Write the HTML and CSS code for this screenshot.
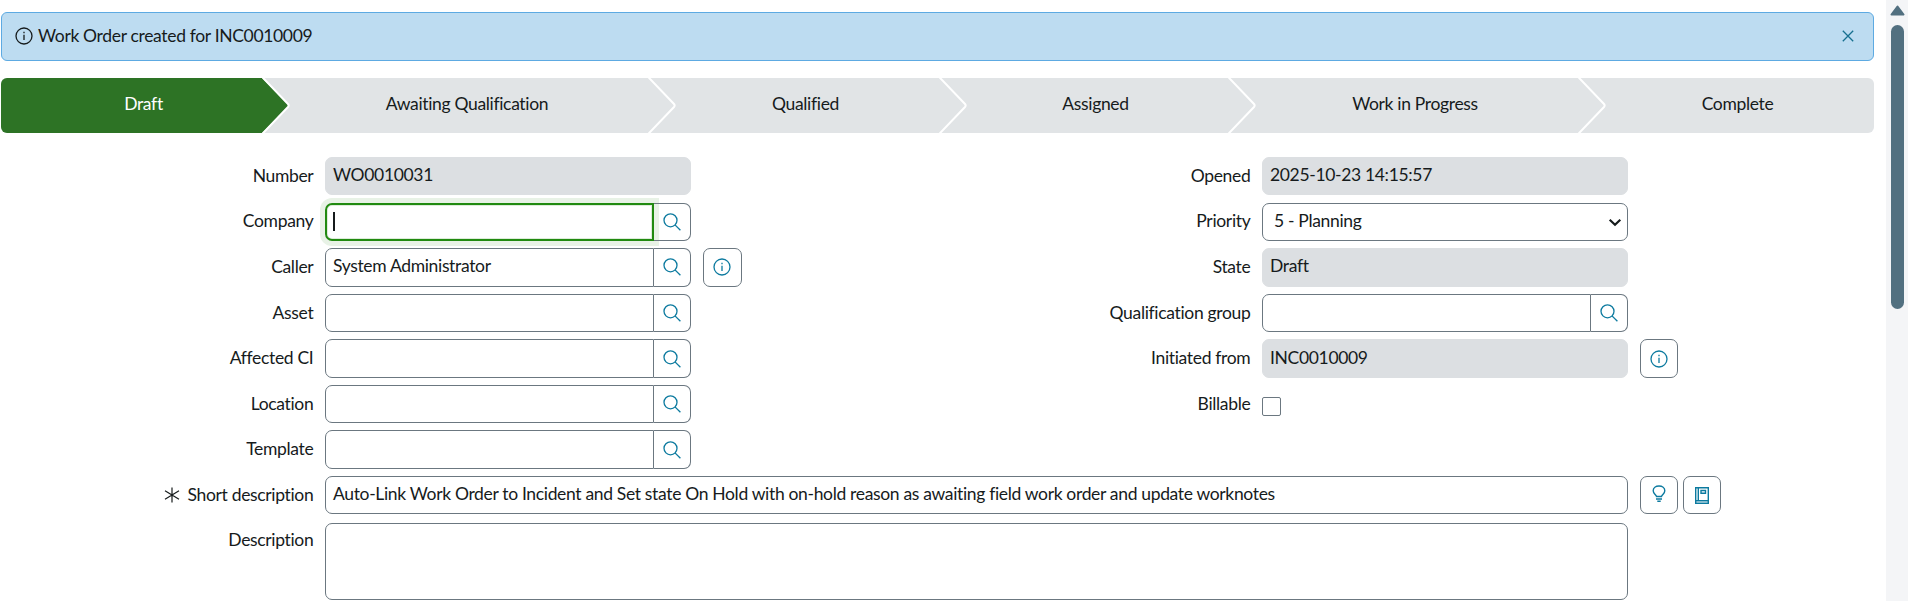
FILE: index.html
```html
<!DOCTYPE html>
<html lang="en">
<head>
<meta charset="utf-8">
<title>Work Order WO0010031</title>
<link rel="stylesheet" href="styles.css">
</head>
<body>
<svg class="defs" aria-hidden="true">
  <symbol id="search" viewBox="0 0 18 18"><circle cx="7.5" cy="7.3" r="6.5"/><path d="M12 11.9L17.4 17.3"/></symbol>
  <symbol id="info" viewBox="0 0 18 18"><circle cx="9" cy="9" r="8"/><path d="M9 7.7V13M9 4.8V6.2"/></symbol>
  <symbol id="chevron" viewBox="0 0 28 55"><path d="M.2 -1L26 26Q27.3 27.5 26 29L.2 56"/></symbol>
</svg>
<div class="page">
  <main class="content">
    <div class="banner">
      <svg class="icon"><use href="#info"/></svg>
      <span>Work Order created for INC0010009</span>
      <svg class="close" viewBox="0 0 12 12"><path d="M.8 .8L11.2 11.2M11.2 .8L.8 11.2"/></svg>
    </div>
    <div class="flow">
      <div class="step draft current">Draft<svg class="tip" viewBox="0 0 28 55"><path class="fill" d="M0 0L25.5 26Q26.5 27.5 25.5 29L0 55Z"/><use href="#chevron"/></svg></div>
      <div class="step awaiting">Awaiting Qualification<svg class="tip"><use href="#chevron"/></svg></div>
      <div class="step qualified">Qualified<svg class="tip"><use href="#chevron"/></svg></div>
      <div class="step assigned">Assigned<svg class="tip"><use href="#chevron"/></svg></div>
      <div class="step progress">Work in Progress<svg class="tip"><use href="#chevron"/></svg></div>
      <div class="step complete">Complete</div>
    </div>
    <form class="form">
      <div class="columns">
        <div class="column">
          <div class="row"><label>Number</label><div class="field readonly">WO0010031</div></div>
          <div class="row"><label>Company</label><div class="field ref focused"><div class="value"><i class="caret"></i></div><div class="lookup"><svg class="icon"><use href="#search"/></svg></div></div></div>
          <div class="row"><label>Caller</label><div class="field ref"><div class="value">System Administrator</div><div class="lookup"><svg class="icon"><use href="#search"/></svg></div></div><div class="button"><svg class="icon"><use href="#info"/></svg></div></div>
          <div class="row"><label>Asset</label><div class="field ref"><div class="value"></div><div class="lookup"><svg class="icon"><use href="#search"/></svg></div></div></div>
          <div class="row"><label>Affected CI</label><div class="field ref"><div class="value"></div><div class="lookup"><svg class="icon"><use href="#search"/></svg></div></div></div>
          <div class="row"><label>Location</label><div class="field ref"><div class="value"></div><div class="lookup"><svg class="icon"><use href="#search"/></svg></div></div></div>
          <div class="row"><label>Template</label><div class="field ref"><div class="value"></div><div class="lookup"><svg class="icon"><use href="#search"/></svg></div></div></div>
        </div>
        <div class="column">
          <div class="row"><label>Opened</label><div class="field readonly">2025-10-23 14:15:57</div></div>
          <div class="row"><label>Priority</label><div class="field select">5 - Planning<svg class="arrow" viewBox="0 0 14 9"><path d="M1.7 1.7L7 6.8L12.3 1.7"/></svg></div></div>
          <div class="row"><label>State</label><div class="field readonly">Draft</div></div>
          <div class="row"><label>Qualification group</label><div class="field ref"><div class="value"></div><div class="lookup"><svg class="icon"><use href="#search"/></svg></div></div></div>
          <div class="row"><label>Initiated from</label><div class="field readonly">INC0010009</div><div class="button"><svg class="icon"><use href="#info"/></svg></div></div>
          <div class="row"><label>Billable</label><div class="checkbox"></div></div>
        </div>
      </div>
      <div class="row"><label><svg class="required" viewBox="0 0 16 16"><path d="M8 .5V15.5M1 3.8L15 12.2M15 3.8L1 12.2"/></svg>Short description</label><div class="field wide">Auto-Link Work Order to Incident and Set state On Hold with on-hold reason as awaiting field work order and update worknotes</div>
        <div class="button"><svg class="bulb" viewBox="0 0 14 18"><path d="M4.5 11.5C4.2 9.7 1.2 8.7 1.2 5.8C1.2 2.9 3.8 1 7 1S12.8 2.9 12.8 5.8C12.8 8.7 9.8 9.7 9.5 11.5Z"/><path d="M4 14H10M5.3 16.3H8.7"/></svg></div>
        <div class="button"><svg class="book" viewBox="0 0 14 17"><path d="M13.3 13.7V.7H.7V16.2H13.3V13.7H1M3.3 1V13.5M6 3.5H10.5V6.2H6Z"/></svg></div>
      </div>
      <div class="row tall"><label>Description</label><div class="field wide"></div></div>
    </form>
  </main>
  <div class="scrollbar">
    <svg class="up" viewBox="0 0 15 11"><path d="M7.5 1.5L13.5 9.5H1.5Z"/></svg>
    <div class="thumb"></div>
  </div>
</div>
</body>
</html>
```
FILE: styles.css
```css
* { box-sizing: border-box; }
body {
  margin: 0;
  background: #fff;
  color: #161b1c;
  font: 17.5px/24px Lato, "Liberation Sans", sans-serif;
  letter-spacing: -0.335px;
  overflow: hidden;
}
svg { display: block; flex: none; fill: none; }
.defs { position: absolute; width: 0; height: 0; }
.page { display: flex; height: 601px; }
.content { flex: 1; min-width: 0; padding: 12px 12px 0 1px; }

.banner {
  display: flex;
  align-items: center;
  width: 1873px;
  height: 49px;
  padding: 0 19px 2px 13px;
  border: 1px solid #5daae2;
  border-radius: 6px;
  background: #bddcf1;
}
.banner span { padding-top: 1px; }
.banner .icon { margin-right: 5px; stroke: #161b1c; }
.close { width: 12px; height: 12px; margin-left: auto; stroke: #17708f; stroke-width: 1.3; }
.icon { width: 18px; height: 18px; stroke: #0c7a9f; stroke-width: 1.3; }

.flow {
  display: flex;
  width: 1873px;
  height: 55px;
  margin-top: 17px;
  border-radius: 6px;
  background: #e1e4e6;
}
.step {
  position: relative;
  display: flex;
  align-items: center;
  justify-content: center;
  padding: 0 0 3px 24px;
}
.step.current { background: #2d7325; color: #fff; border-radius: 6px 0 0 6px; }
.tip { position: absolute; left: 100%; top: 0; width: 28px; height: 55px; stroke: #fff; stroke-width: 2; }
.tip .fill { fill: #2d7325; stroke: none; }
.draft { width: 261px; }
.awaiting { width: 386px; }
.qualified { width: 291px; }
.assigned { width: 289px; }
.progress { width: 350px; }
.complete { flex: 1; padding-left: 23px; }

.form { display: flex; flex-direction: column; gap: 7.2px; margin-top: 24px; }
.columns { display: flex; }
.column { display: flex; flex-direction: column; gap: 7.2px; width: 937px; flex: none; }
.row { display: flex; height: 38.4px; }
label {
  display: flex;
  flex: none;
  align-items: center;
  justify-content: flex-end;
  width: 312.4px;
  margin-right: 11.6px;
  padding-bottom: 0.8px;
}
.field {
  display: flex;
  flex: none;
  align-items: center;
  width: 366px;
  padding: 0 7px 2px;
  border: 1px solid #6b7780;
  border-radius: 7px;
}
.readonly { background: #dcdfe2; border-color: #dcdfe2; }
.select { padding: 0 5px 1.6px 11px; }
.arrow { width: 14px; height: 9px; margin: 3px 0 0 auto; stroke: #161b1c; stroke-width: 2.2; }
.ref { padding: 0; border: 0; }
.value {
  display: flex;
  align-items: center;
  width: 329px;
  height: 100%;
  padding: 0 7px 2.4px;
  border: 1px solid #6b7780;
  border-radius: 7px 0 0 7px;
}
.lookup {
  display: flex;
  align-items: center;
  width: 37px;
  height: 100%;
  padding: 0 0 0 9px;
  border: 1px solid #6b7780;
  border-left: 0;
  border-radius: 0 7px 7px 0;
}
.focused .value {
  border: 2px solid #218a10;
  padding: 0 6px 1px;
  box-shadow: 0 0 0 5px #e8f2e6, inset 0 0 0 1px #dcecd9;
}
.focused .lookup { position: relative; z-index: 1; }
.caret { width: 2px; height: 19px; background: #161b1c; }
.button {
  display: flex;
  flex: none;
  align-items: center;
  justify-content: center;
  width: 38.4px;
  margin-left: 12px;
  border: 1px solid #6b7780;
  border-radius: 7px;
}
.ref + .button { width: 39px; }
.button + .button { margin-left: 4.4px; }
.bulb { width: 14px; height: 18px; margin-bottom: 2px; stroke: #0c7a9f; stroke-width: 1.4; }
.book { width: 14px; height: 17px; margin: 1px 0 0 1px; stroke: #0c7a9f; stroke-width: 1.4; }
.checkbox { width: 19px; height: 19px; margin-top: 12px; border: 1px solid #6b7780; border-radius: 2px; }
.required { width: 16px; height: 16px; margin-right: 8px; stroke: #161b1c; stroke-width: 1.2; }
.wide { width: 1303px; }
.tall { height: 77px; margin-top: 1px; }
.tall label { align-items: flex-start; padding-top: 5px; }

.scrollbar { flex: none; width: 22px; padding: 5px 0 0 4px; background: #f4f5f7; }
.up { width: 15px; height: 11px; fill: #527080; stroke: #527080; stroke-width: 2; stroke-linejoin: round; }
.thumb { width: 13px; height: 284px; margin: 9px 0 0 1px; border-radius: 6.5px; background: #527080; }
```
